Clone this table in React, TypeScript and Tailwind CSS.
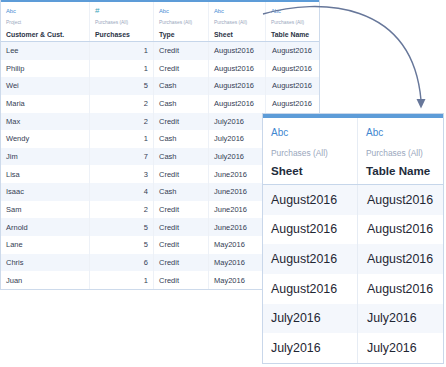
import React from 'react';

const rows = [
  ['Lee', '1', 'Credit', 'August2016'],
  ['Philip', '1', 'Credit', 'August2016'],
  ['Wei', '5', 'Cash', 'August2016'],
  ['Maria', '2', 'Cash', 'August2016'],
  ['Max', '2', 'Credit', 'July2016'],
  ['Wendy', '1', 'Cash', 'July2016'],
  ['Jim', '7', 'Cash', 'July2016'],
  ['Lisa', '3', 'Credit', 'June2016'],
  ['Isaac', '4', 'Cash', 'June2016'],
  ['Sam', '2', 'Credit', 'June2016'],
  ['Arnold', '5', 'Credit', 'June2016'],
  ['Lane', '5', 'Credit', 'May2016'],
  ['Chris', '6', 'Credit', 'May2016'],
  ['Juan', '1', 'Credit', 'May2016'],
];

const headers = [
  { type: 'Abc', caption: 'Project', name: 'Customer & Cust.' },
  { type: '#', caption: 'Purchases (All)', name: 'Purchases' },
  { type: 'Abc', caption: 'Purchases (All)', name: 'Type' },
  { type: 'Abc', caption: 'Purchases (All)', name: 'Sheet' },
  { type: 'Abc', caption: 'Purchases (All)', name: 'Table Name' },
];

const zoomed = ['August2016', 'August2016', 'August2016', 'August2016', 'July2016', 'July2016'];

function MainTable() {
  return (
    <div className="w-[320px] border-l border-r border-b border-[#cddaeb] font-['Liberation_Sans',sans-serif]">
      <div className="h-[2px] bg-[#5d9cd8]" />
      {/* header */}
      <div className="grid grid-cols-[89px_64px_55px_57px_54px] h-[40px] border-b border-[#c6d6ea]">
        {headers.map((h, i) => (
          <div key={i} className="flex flex-col px-[5px] pt-[5px] border-r border-[#edf1f7] last:border-r-0">
            <div
              className={
                h.type === '#'
                  ? 'text-[8px] leading-[8px] text-[#3aa3b8]'
                  : 'text-[5.8px] leading-[8px] text-[#4a8fd4]'
              }
            >
              {h.type}
            </div>
            <div className="mt-[5px] text-[4.9px] leading-[6px] text-[#9aa7bd]">{h.caption}</div>
            <div className="mt-[3.5px] text-[6.9px] leading-[9px] font-bold text-[#2a3346]">{h.name}</div>
          </div>
        ))}
      </div>
      {/* rows; table name cells below the zoom panel are hidden anyway */}
      {rows.map((r, i) => (
        <div
          key={i}
          className={
            'grid grid-cols-[89px_64px_55px_57px_54px] h-[17.65px] text-[7.5px] text-[#343d54] ' +
            (i % 2 === 0 ? 'bg-[#f2f6fc]' : 'bg-white')
          }
        >
          <div className="flex items-center px-[5px] border-r border-[#edf1f7]">{r[0]}</div>
          <div className="flex items-center justify-end px-[5px] border-r border-[#edf1f7]">{r[1]}</div>
          <div className="flex items-center px-[5px] border-r border-[#edf1f7]">{r[2]}</div>
          <div className="flex items-center px-[5px] border-r border-[#edf1f7]">{r[3]}</div>
          <div className="flex items-center px-[6px]">{i < 4 ? r[3] : ''}</div>
        </div>
      ))}
    </div>
  );
}

function ZoomPanel() {
  return (
    <div className="absolute left-[262px] top-[113px] w-[182px] bg-white border border-[#c9d7ea] font-['Liberation_Sans',sans-serif]">
      <div className="h-[4px] bg-[#5d9cd8]" />
      <div className="grid grid-cols-[95px_85px] h-[67px] border-b border-[#c6d6ea]">
        {['Sheet', 'Table Name'].map((name, i) => (
          <div key={i} className="flex flex-col pl-[8px] pt-[9px] border-r border-[#e6ecf4] last:border-r-0">
            <div className="text-[10px] leading-[12px] text-[#3f87d0]">Abc</div>
            <div className="mt-[8px] text-[8.4px] leading-[12px] text-[#9aa7bd]">Purchases (All)</div>
            <div className="mt-[5px] text-[11.6px] leading-[14px] font-bold text-[#222b3b]">{name}</div>
          </div>
        ))}
      </div>
      {zoomed.map((v, i) => (
        <div
          key={i}
          className={
            'grid grid-cols-[95px_85px] h-[29.7px] text-[12.4px] text-[#1f2633] ' +
            (i % 2 === 0 ? 'bg-[#f4f7fc]' : 'bg-white')
          }
        >
          <div className="flex items-center pl-[8px] border-r border-[#e6ecf4]">{v}</div>
          <div className="flex items-center pl-[9px]">{v}</div>
        </div>
      ))}
    </div>
  );
}

export default function App() {
  return (
    <div className="relative w-[446px] h-[367px] bg-white overflow-hidden">
      <MainTable />
      <ZoomPanel />
      {/* connecting arrow */}
      <svg className="absolute left-0 top-0 pointer-events-none" width="446" height="367">
        <path
          d="M263 14 C 318 -2, 412 0, 421 100"
          fill="none"
          stroke="#67779a"
          strokeWidth="1.4"
        />
        <path d="M416.5 99 L425.5 99 L421 108.5 Z" fill="#67779a" />
      </svg>
    </div>
  );
}
